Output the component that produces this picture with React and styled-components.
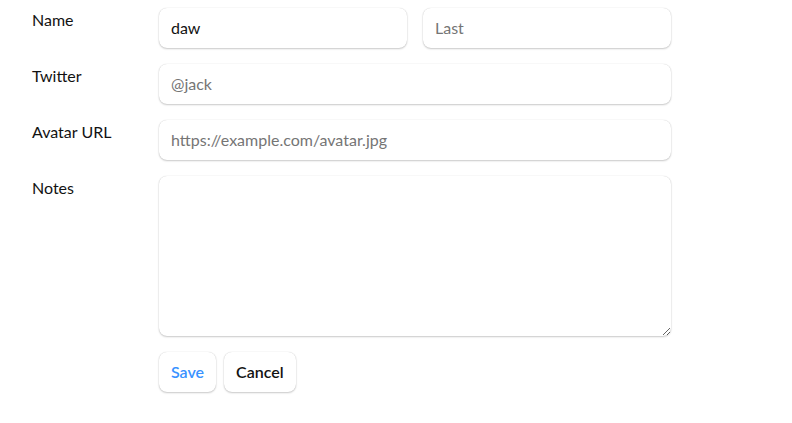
import styled, { createGlobalStyle } from 'styled-components';

const Global = createGlobalStyle`
  html, body { margin: 0; padding: 0; background: #fff; }
  body {
    font-family: "Segoe UI", Lato, "Noto Sans", sans-serif;
    font-size: 16px;
    line-height: 1.5;
    color: #121212;
  }
`;

const Page = styled.div`
  padding: 8px 31px;
`;

const Form = styled.form`
  display: flex;
  flex-direction: column;
  gap: 16px;
  max-width: 640px;
`;

const Row = styled.label`
  display: flex;
  margin: 0;
`;

const Caption = styled.span`
  width: 128px;
  flex-shrink: 0;
  padding-left: 1px;
  box-sizing: border-box;
`;

const field = `
  font-size: 16px;
  font-family: inherit;
  border: none;
  border-radius: 8px;
  padding: 8px 12px;
  box-shadow: 0 0 1px hsla(0, 0%, 0%, 0.2), 0 1px 2px hsla(0, 0%, 0%, 0.2);
  background-color: #fff;
  line-height: 1.5;
  margin: 0;
  color: #121212;
  outline: none;
  &::placeholder { color: #757575; }
`;

const Input = styled.input`
  ${field}
  flex: 2 1 0;
  min-width: 0;
  margin-right: ${p => (p.$gap ? '16px' : '0')};
`;

const TextArea = styled.textarea`
  ${field}
  flex: 2 1 0;
  resize: vertical;
`;

const Actions = styled.p`
  display: flex;
  gap: 8px;
  margin: 0 0 0 128px;
`;

const Button = styled.button`
  ${field}
  font-weight: 600;
  color: ${p => (p.$plain ? '#121212' : '#3992ff')};
  cursor: pointer;
`;

export default function App() {
  return (
    <Page>
      <Global />
      <Form onSubmit={e => e.preventDefault()}>
        <Row as="p">
          <Caption>Name</Caption>
          <Input $gap defaultValue="daw" placeholder="First" />
          <Input placeholder="Last" />
        </Row>
        <Row>
          <Caption>Twitter</Caption>
          <Input placeholder="@jack" />
        </Row>
        <Row>
          <Caption>Avatar URL</Caption>
          <Input placeholder="https://example.com/avatar.jpg" />
        </Row>
        <Row>
          <Caption>Notes</Caption>
          <TextArea rows={6} />
        </Row>
        <Actions>
          <Button type="submit">Save</Button>
          <Button type="button" $plain>Cancel</Button>
        </Actions>
      </Form>
    </Page>
  );
}
